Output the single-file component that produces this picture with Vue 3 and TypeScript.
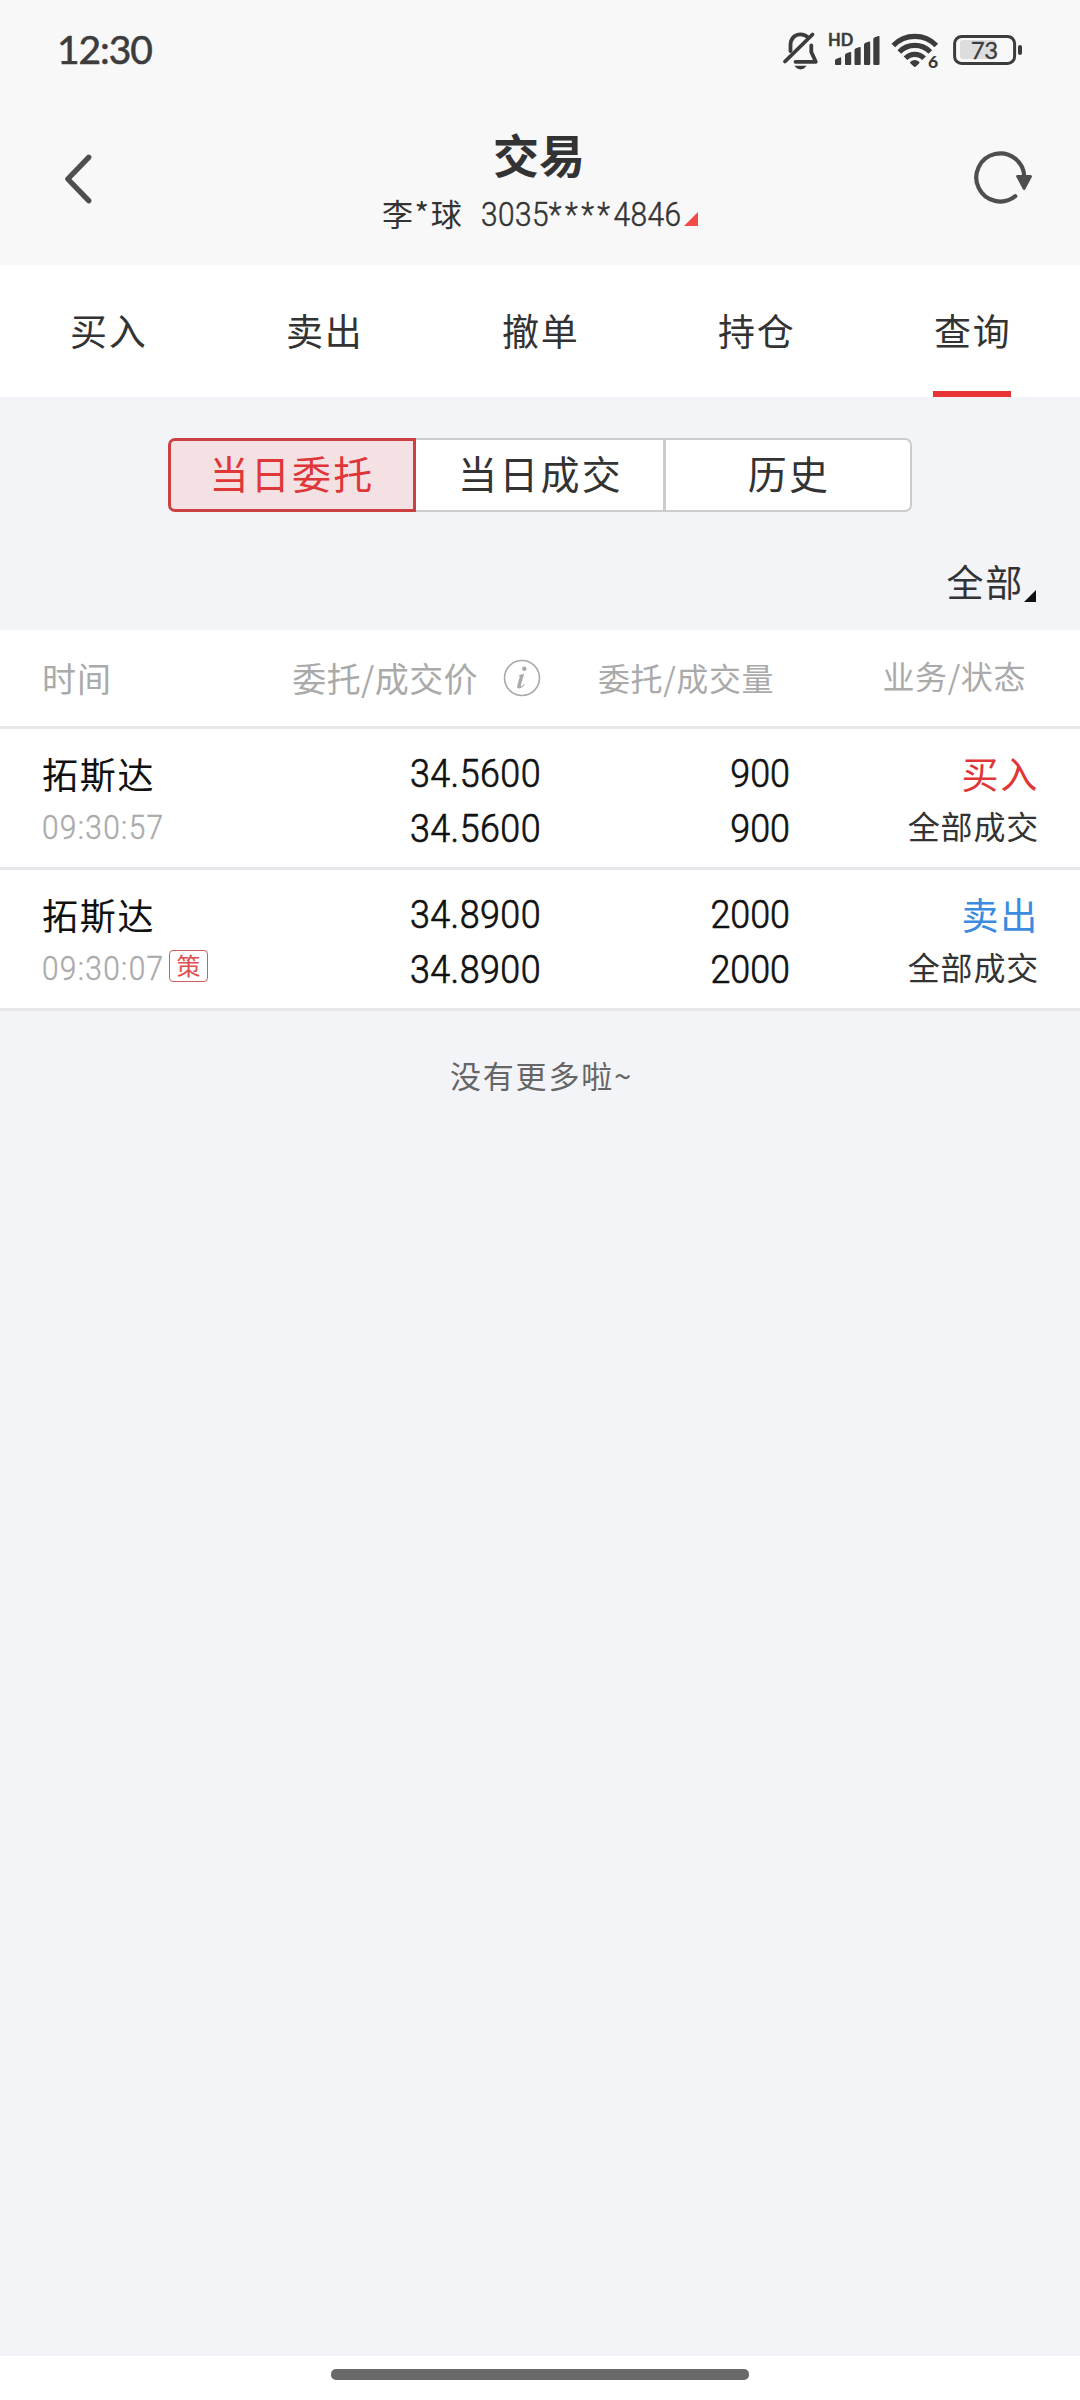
<script setup lang="ts">
interface Order {
  name: string
  time: string
  strategy: boolean
  price: string
  dealPrice: string
  amount: string
  dealAmount: string
  side: 'buy' | 'sell'
  status: string
}

const tabs: string[] = ['买入', '卖出', '撤单', '持仓', '查询']
const activeTab = '查询'

const segments: string[] = ['当日委托', '当日成交', '历史']
const activeSegment = '当日委托'

const orders: Order[] = [
  {
    name: '拓斯达', time: '09:30:57', strategy: false,
    price: '34.5600', dealPrice: '34.5600', amount: '900', dealAmount: '900',
    side: 'buy', status: '全部成交',
  },
  {
    name: '拓斯达', time: '09:30:07', strategy: true,
    price: '34.8900', dealPrice: '34.8900', amount: '2000', dealAmount: '2000',
    side: 'sell', status: '全部成交',
  },
]

const sideLabel: Record<Order['side'], string> = { buy: '买入', sell: '卖出' }
</script>

<template>
  <div class="screen">
    <div class="status-bar">
      <span class="clock">12:30</span>
      <svg class="status-icons" width="250" height="44" viewBox="780 28 250 44">
        <!-- muted bell -->
        <g fill="none" stroke="#3c3c3c" stroke-width="3.8" stroke-linecap="round" stroke-linejoin="round">
          <path d="M790.5 51V45c0-6 4-10.700 10-10.700c3.200 0 5.800 1.200 7.600 3.200" />
          <path d="M785 61.500L812.500 34.500" />
          <path d="M811.300 45.500V52l4.500 9.800H795.500" />
        </g>
        <path d="M794.500 65.800h12c-1.500 2.300-3.500 3.600-6 3.600s-4.500-1.300-6-3.600z" fill="#3c3c3c" />
        <!-- signal -->
        <text x="828" y="46" class="hd">HD</text>
        <g fill="#3c3c3c">
          <path d="M835 60.500q0-1 1-1.500l4-1.600q1.200-.4 1.200.8V64q0 1-1 1h-4.200q-1 0-1-1z" />
          <path d="M845 55q0-1 1-1.500l4-1.500q1.200-.4 1.200.8V64q0 1-1 1h-4.200q-1 0-1-1z" />
          <path d="M854.500 50q0-1 1-1.500l4-1.500q1.200-.4 1.200.8V64q0 1-1 1h-4.200q-1 0-1-1z" />
          <path d="M864 44.500q0-1 1-1.500l4-1.500q1.200-.4 1.200.8V64q0 1-1 1h-4.200q-1 0-1-1z" />
          <path d="M873.300 39q0-1 1-1.500l4-1.500q1.200-.4 1.200.8V64q0 1-1 1h-4.200q-1 0-1-1z" />
        </g>
        <!-- wifi -->
        <g fill="none" stroke="#3c3c3c" stroke-width="5.200">
          <path d="M893.300 45.500a30 30 0 0 1 43 0" />
          <path d="M899.300 52a21.500 21.500 0 0 1 31 0" />
          <path d="M905.500 58.300a13 13 0 0 1 18.600 0" />
        </g>
        <path d="M910.500 63.500q-1-1 .2-2a6.200 6.200 0 0 1 8.200 0q1.200 1 .2 2l-3 2.800q-1.300 1.200-2.600 0z" fill="#3c3c3c" />
        <text x="928" y="67.800" class="wifi-gen">6</text>
        <!-- battery -->
        <rect x="960" y="40" width="36" height="19" rx="3" fill="#dddddd" />
        <rect x="954.600" y="36.600" width="60" height="26.800" rx="7" fill="none" stroke="#3c3c3c" stroke-width="3" />
        <rect x="1018" y="45" width="4" height="10" rx="2" fill="#3c3c3c" />
        <text x="970.800" y="59" class="battery-text">73</text>
      </svg>
    </div>

    <header class="title-bar">
      <svg class="back" width="40" height="60" viewBox="58 149 40 60">
        <path d="M88.700 157.300L67.800 179L88.700 200.700" fill="none" stroke="#4e4e4e" stroke-width="5.400" stroke-linecap="round" stroke-linejoin="round" />
      </svg>
      <div class="heading">
        <h1>交易</h1>
        <div class="account">
          <span class="holder">李*球</span>
          <span class="number">3035<span class="mask">****</span>4846</span>
          <svg class="corner" width="14" height="14" viewBox="0 0 14 14"><path d="M14 0V14H0z" fill="#f34b48" /></svg>
        </div>
      </div>
      <svg class="refresh" width="70" height="64" viewBox="970 146 70 64">
        <path d="M1024.300 177.500A24 24 0 1 0 1015.300 196.200" fill="none" stroke="#4e4e4e" stroke-width="4.200" stroke-linecap="round" />
        <path d="M1017.700 176.400H1030.500L1024.100 188.400z" fill="#4e4e4e" stroke="#4e4e4e" stroke-width="3" stroke-linejoin="round" />
      </svg>
    </header>

    <nav class="tabs">
      <div v-for="tab in tabs" :key="tab" class="tab">
        <span :class="['tab-label', { active: tab === activeTab }]">{{ tab }}</span>
      </div>
    </nav>

    <div class="segments">
      <div v-for="s in segments" :key="s" :class="['segment', { active: s === activeSegment }]">{{ s }}</div>
    </div>

    <div class="filter">
      <span>全部</span>
      <svg width="12" height="12" viewBox="0 0 12 12"><path d="M12 0V12H0z" fill="#111" /></svg>
    </div>

    <div class="table">
      <div class="row head">
        <div class="c-name">时间</div>
        <div class="c-price">
          <span>委托/成交价</span>
          <svg width="38" height="38" viewBox="0 0 38 38">
            <circle cx="19" cy="19" r="17.500" fill="none" stroke="#aaa" stroke-width="1.600" />
            <circle cx="21.300" cy="9.800" r="2.200" fill="#aaa" />
            <path d="M14.800 17.200q3-2.200 6.300-2.500l-3.200 11.500q-.3 1.300.5 1.100q1.200-.5 2.600-2.500l.7.500q-2.300 4-5.600 4.200q-2.600 0-1.800-3l2.400-8.600q.2-1-.7-.8l-1 .4z" fill="#aaa" />
          </svg>
        </div>
        <div class="c-amount">委托/成交量</div>
        <div class="c-status">业务/状态</div>
      </div>

      <div v-for="(o, i) in orders" :key="i" class="row order">
        <div class="c-name">
          <div class="stock">{{ o.name }}</div>
          <div class="time-line">
            <span class="time">{{ o.time }}</span>
            <span v-if="o.strategy" class="badge">策</span>
          </div>
        </div>
        <div class="c-price figures">
          <div>{{ o.price }}</div>
          <div>{{ o.dealPrice }}</div>
        </div>
        <div class="c-amount figures">
          <div>{{ o.amount }}</div>
          <div>{{ o.dealAmount }}</div>
        </div>
        <div class="c-status">
          <div :class="['side', o.side]">{{ sideLabel[o.side] }}</div>
          <div class="state">{{ o.status }}</div>
        </div>
      </div>
    </div>

    <div class="end">没有更多啦~</div>

    <div class="home-area"><div class="home-bar"></div></div>
  </div>
</template>

<style>
body {
  background: #f3f4f8;
}
</style>

<style scoped>
.screen {
  width: 1080px;
  height: 2400px;
  display: flex;
  flex-direction: column;
  background: #f3f4f8;
  color: #333;
  font-family: "Noto Sans CJK SC", sans-serif;
  overflow: hidden;
  white-space: nowrap;
}
.screen * {
  box-sizing: border-box;
}

.status-bar {
  flex: none;
  height: 100px;
  background: #f8f8f8;
  display: flex;
  justify-content: space-between;
  align-items: flex-start;
  padding: 28px 50px 0 57px;
}
.clock {
  font: 400 39px/43px Lato, sans-serif;
  letter-spacing: -1.100px;
  color: #3c3c3c;
  -webkit-text-stroke: 0.600px #3c3c3c;
}
.hd {
  font: 700 16.500px Lato, sans-serif;
  fill: #3c3c3c;
  stroke: #3c3c3c;
  stroke-width: 0.400px;
}
.wifi-gen {
  font: 900 17.500px Lato, sans-serif;
  fill: #3c3c3c;
}
.battery-text {
  font: 400 24px Lato, sans-serif;
  letter-spacing: -0.500px;
  fill: #3c3c3c;
  stroke: #3c3c3c;
  stroke-width: 0.300px;
}

.title-bar {
  flex: none;
  height: 165px;
  background: #f8f8f8;
  display: grid;
  grid-template-columns: 200px 1fr 200px;
}
.back {
  margin: 49px 0 0 58px;
}
.refresh {
  margin: 46px 0 0 90px;
}
.heading {
  display: flex;
  flex-direction: column;
  align-items: center;
}
h1 {
  margin: 23px 0 0;
  font-size: 46px;
  line-height: 60px;
  font-weight: 700;
  padding-right: 2px;
}
.account {
  display: flex;
  margin-top: 7px;
  height: 44px;
  line-height: 46px;
  width: 316px;
}
.holder {
  width: 99px;
  font-size: 31px;
  letter-spacing: 1.600px;
}
.number {
  width: 203px;
  font-family: Roboto, sans-serif;
  font-size: 32.800px;
  font-weight: 300;
  line-height: 51px;
  letter-spacing: 0.450px;
  -webkit-text-stroke: 0.500px #333;
  transform: scaleX(0.910);
  transform-origin: left;
}
.mask {
  letter-spacing: 3.850px;
}
.corner {
  margin-top: 22px;
}

.tabs {
  flex: none;
  height: 132px;
  background: #fff;
  display: flex;
}
.tab {
  flex: 1;
  display: flex;
  justify-content: center;
}
.tab-label {
  width: 78px;
  font-size: 37px;
  letter-spacing: 1.800px;
  line-height: 130px;
  text-align: center;
  text-indent: 1px;
}
.tab-label.active {
  border-bottom: 6px solid #e83434;
}

.segments {
  flex: none;
  display: flex;
  width: 744px;
  height: 74px;
  margin: 41px auto 0;
}
.segment {
  width: 248px;
  background: #fff;
  border: 2px solid #ccc;
  font-size: 39px;
  letter-spacing: 2.200px;
  text-indent: 2px;
  line-height: 65px;
  text-align: center;
}
.segment:nth-child(2) {
  width: 247px;
  border-left: 0;
  border-right: 0;
}
.segment:last-child {
  width: 249px;
  border-left-width: 3px;
  border-radius: 0 7px 7px 0;
}
.segment.active {
  border: 3px solid #cb4143;
  border-radius: 7px 0 0 7px;
  background: #f3e1e4;
  color: #df3638;
  line-height: 63px;
  text-indent: 0;
}

.filter {
  flex: none;
  height: 118px;
  display: flex;
  justify-content: flex-end;
  padding-right: 44px;
  font-size: 37px;
  letter-spacing: 1.800px;
}
.filter span {
  line-height: 50px;
  margin: 44px 0 0;
}
.filter svg {
  margin-top: 78px;
}

.table {
  flex: none;
  background: #fff;
}
.row {
  display: grid;
  grid-template-columns: 208px 290px 248px 250px;
  padding-left: 42px;
  border-bottom: 3px solid #e6e6eb;
}
.head {
  height: 99px;
  line-height: 96px;
  color: #aaa;
  font-size: 34px;
  letter-spacing: 1px;
}
.head .c-price {
  display: flex;
  justify-content: flex-end;
  align-items: flex-start;
  letter-spacing: 0.400px;
}
.head .c-price svg {
  margin: 29px -1px 0 25px;
}
.head .c-amount {
  font-size: 32px;
  line-height: 95px;
  padding-left: 58px;
  letter-spacing: 0.600px;
}
.head .c-status {
  font-size: 32px;
  line-height: 91px;
  text-align: right;
  padding-right: 12px;
  letter-spacing: 0.600px;
}
.order {
  height: 141px;
}
.stock {
  margin-top: 19px;
  font-size: 36px;
  letter-spacing: 1.800px;
  line-height: 50px;
  color: #111;
}
.time-line {
  display: flex;
  height: 40px;
  margin-top: 9px;
}
.time {
  width: 127px;
  font: 300 32.800px/42px Roboto, sans-serif;
  letter-spacing: 1.450px;
  color: #aaa;
  -webkit-text-stroke: 0.400px #aaa;
  transform: scaleX(0.910);
  transform-origin: left;
}
.badge {
  width: 39px;
  height: 32px;
  margin-top: 2px;
  border: 1.500px solid #cf5f60;
  border-radius: 4px;
  color: #df4f50;
  font-size: 24px;
  line-height: 28px;
  text-align: center;
}
.figures {
  padding-top: 17px;
  text-align: right;
  color: #111;
  font: 300 39.400px/55px Roboto, sans-serif;
  -webkit-text-stroke: 0.700px #111;
}
.figures div {
  letter-spacing: 0.500px;
  transform: translateX(1px) scaleX(0.910);
  transform-origin: right;
}
.figures.c-amount div {
  letter-spacing: 0;
  transform: translateX(2px) scaleX(0.910);
}
.order .c-status {
  text-align: right;
}
.side {
  margin-top: 19px;
  font-size: 37px;
  letter-spacing: 1.800px;
  line-height: 50px;
  margin-right: -1px;
}
.side.buy {
  color: #df3638;
}
.side.sell {
  color: #3b8be0;
}
.state {
  font-size: 32px;
  letter-spacing: 0.800px;
  line-height: 44px;
  margin: 5px -1px 0 0;
}

.end {
  flex: none;
  margin-top: 42px;
  line-height: 44px;
  font-size: 31px;
  letter-spacing: 1.800px;
  text-align: center;
  text-indent: 3px;
  color: #666;
}

.home-area {
  flex: none;
  height: 44px;
  margin-top: auto;
  background: #fff;
  display: flex;
  justify-content: center;
  align-items: flex-start;
}
.home-bar {
  width: 418px;
  height: 11px;
  margin-top: 13px;
  border-radius: 5px;
  background: #696969;
}
</style>
